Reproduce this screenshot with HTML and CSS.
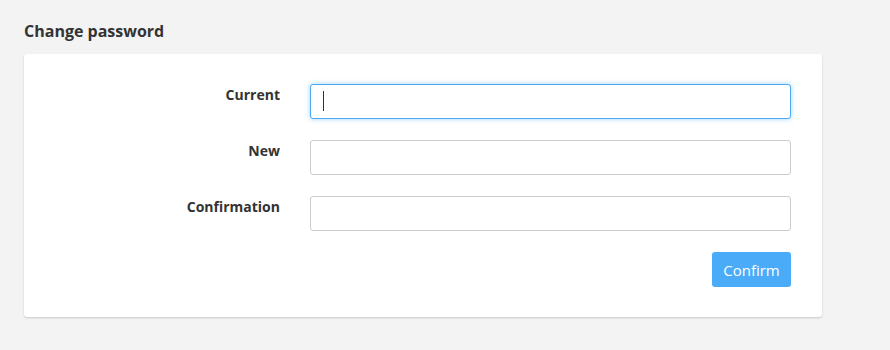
FILE: index.html
```html
<!DOCTYPE html>
<html lang="en">

<head>
    <meta charset="UTF-8">
    <meta name="viewport" content="width=device-width, initial-scale=1.0">
    <title>Change password</title>
    <link rel="stylesheet" href="styles.css">
</head>

<body>
    <h2 class="page-title">Change password</h2>

    <form class="card">
        <div class="form-row">
            <label for="current">Current</label>
            <div class="field">
                <input type="password" id="current" class="focused">
                <span class="caret"></span>
            </div>
        </div>

        <div class="form-row">
            <label for="newPassword">New</label>
            <div class="field">
                <input type="password" id="newPassword">
            </div>
        </div>

        <div class="form-row">
            <label for="confirmation">Confirmation</label>
            <div class="field">
                <input type="password" id="confirmation">
            </div>
        </div>

        <div class="actions">
            <button type="button" class="confirm">Confirm</button>
        </div>
    </form>
</body>

</html>
```

FILE: styles.css
```css
body {
    font-family: "Open Sans", Arial, sans-serif;
    background-color: #f3f3f3;
    color: #333;
    margin: 0;
    padding: 20px 68px 32px 24px;
}

.page-title {
    font-size: 16px;
    font-weight: 700;
    line-height: 22px;
    margin: 0 0 12px 0;
    color: #333;
}

.card {
    background-color: white;
    border-radius: 3px;
    box-shadow: 0 1px 2px rgba(0, 0, 0, 0.18);
    padding: 30px 31px 30px 30px;
}

.form-row {
    display: grid;
    grid-template-columns: 226px 1fr;
    column-gap: 30px;
    margin-bottom: 21px;
}

.form-row label {
    text-align: right;
    font-size: 14px;
    font-weight: 700;
    line-height: 19px;
    padding-top: 1px;
}

.field {
    position: relative;
}

input {
    display: block;
    width: 100%;
    box-sizing: border-box;
    height: 35px;
    padding: 6px 12px;
    border: 1px solid #ccc;
    border-radius: 3px;
    font-size: 14px;
    outline: none;
}

input.focused {
    border-color: #4aa9f5;
    box-shadow: 0 0 5px rgba(74, 169, 245, 0.5);
}

.caret {
    position: absolute;
    left: 13px;
    top: 7px;
    width: 1px;
    height: 20px;
    background-color: #333;
}

.actions {
    display: flex;
    justify-content: flex-end;
}

button.confirm {
    height: 35px;
    width: 79px;
    background-color: #4aabf8;
    color: white;
    border: none;
    border-radius: 3px;
    font-family: "Open Sans", Arial, sans-serif;
    font-size: 15px;
    cursor: pointer;
}
```
